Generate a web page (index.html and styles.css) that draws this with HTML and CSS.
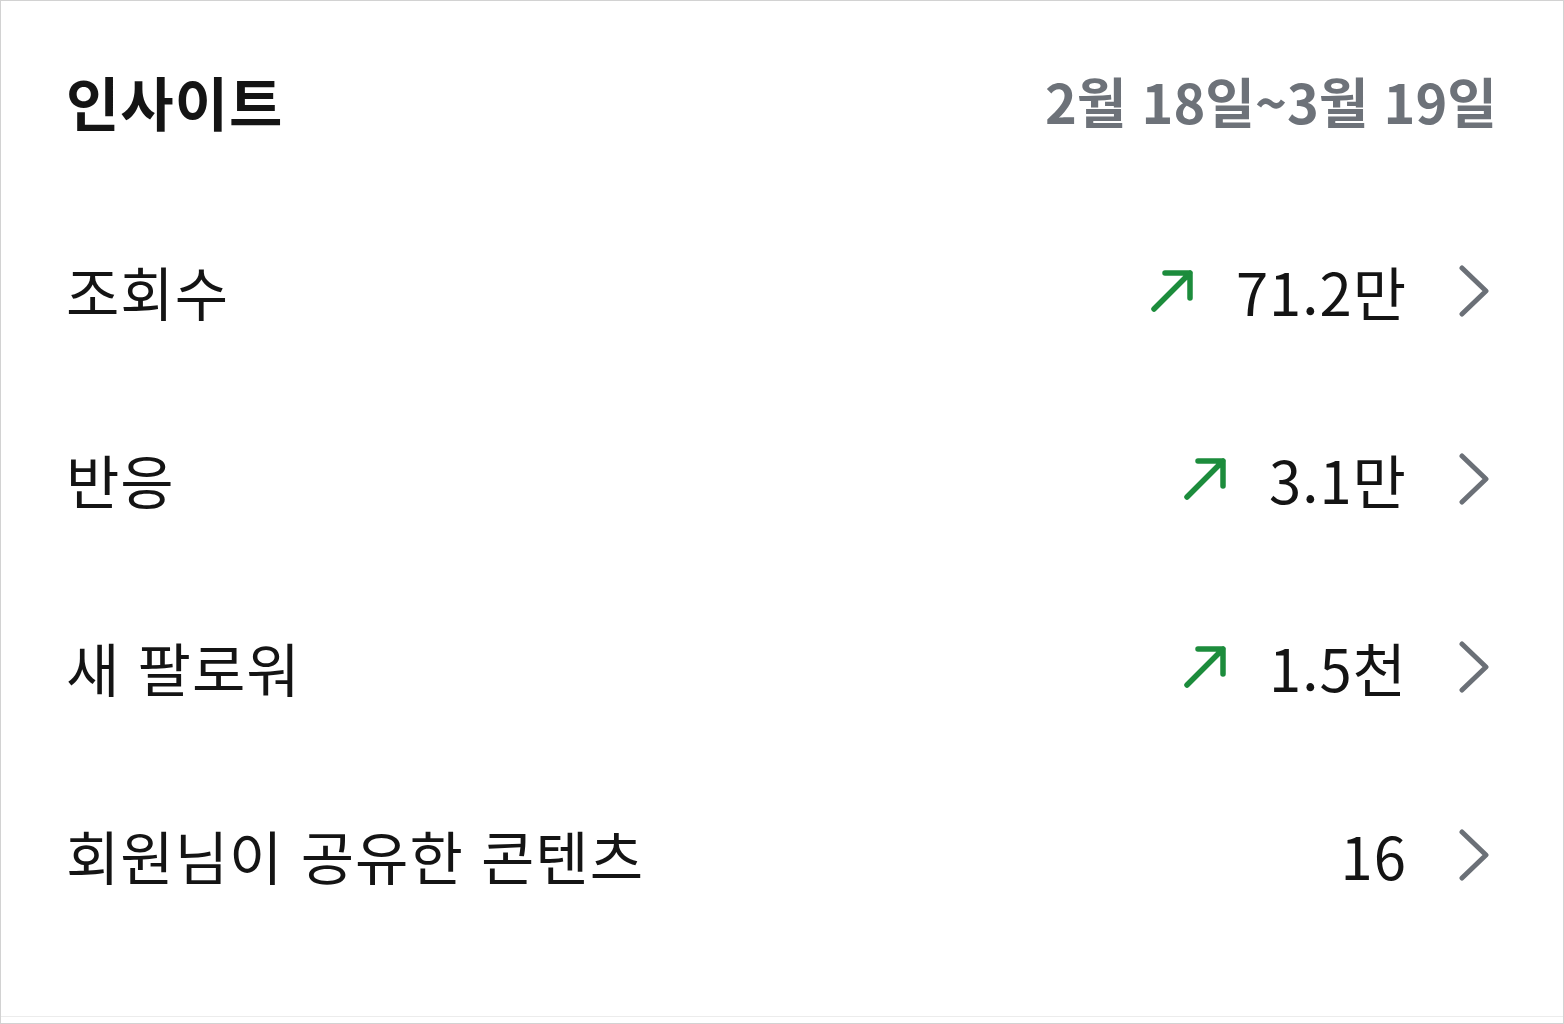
FILE: index.html
```html
<!DOCTYPE html>
<html lang="ko">
<head>
    <meta charset="UTF-8">
    <meta name="viewport" content="width=device-width, initial-scale=1.0">
    <title>인사이트</title>
    <link rel="stylesheet" href="styles.css">
</head>
<body>
    <div class="card">
        <div class="header">
            <h1 class="title">인사이트</h1>
            <span class="period">2월 18일~3월 19일</span>
        </div>
        <div class="list">
            <a class="row" href="#">
                <span class="label">조회수</span>
                <span class="right">
                    <svg class="trend" viewBox="0 0 44 44"><path d="M4 40 L40 4 M15 4 H40 V29"/></svg>
                    <span class="value">71.2만</span>
                    <svg class="chev" viewBox="0 0 30 52"><path d="M3 3 L27 26 L3 49"/></svg>
                </span>
            </a>
            <a class="row" href="#">
                <span class="label">반응</span>
                <span class="right">
                    <svg class="trend" viewBox="0 0 44 44"><path d="M4 40 L40 4 M15 4 H40 V29"/></svg>
                    <span class="value">3.1만</span>
                    <svg class="chev" viewBox="0 0 30 52"><path d="M3 3 L27 26 L3 49"/></svg>
                </span>
            </a>
            <a class="row" href="#">
                <span class="label">새 팔로워</span>
                <span class="right">
                    <svg class="trend" viewBox="0 0 44 44"><path d="M4 40 L40 4 M15 4 H40 V29"/></svg>
                    <span class="value">1.5천</span>
                    <svg class="chev" viewBox="0 0 30 52"><path d="M3 3 L27 26 L3 49"/></svg>
                </span>
            </a>
            <a class="row" href="#">
                <span class="label">회원님이 공유한 콘텐츠</span>
                <span class="right">
                    <span class="value">16</span>
                    <svg class="chev" viewBox="0 0 30 52"><path d="M3 3 L27 26 L3 49"/></svg>
                </span>
            </a>
        </div>
        <div class="spacer"></div>
    </div>
</body>
</html>
```

FILE: styles.css
```css
body
{
    margin: 0;
    background: #fff;
    font-family: "Noto Sans CJK KR", "Noto Sans", sans-serif;
    color: #141414;
}
.card
{
    box-sizing: border-box;
    height: 1024px;
    border: 1px solid #d2d2d2;
    display: flex;
    flex-direction: column;
    padding-bottom: 6px;
}
.header
{
    display: flex;
    justify-content: space-between;
    align-items: center;
    height: 193px;
    padding: 3px 66px 0 65px;
}
.title
{
    margin: 0;
    font-size: 58px;
    font-weight: 700;
    letter-spacing: 1px;
}
.period
{
    font-size: 54px;
    font-weight: 700;
    color: #6d7279;
}
.row
{
    display: flex;
    justify-content: space-between;
    align-items: center;
    height: 188px;
    padding: 0 74px 0 65px;
    text-decoration: none;
    color: inherit;
}
.label
{
    font-size: 58px;
    letter-spacing: 1px;
}
.right
{
    display: flex;
    align-items: center;
}
.value
{
    font-size: 58px;
    letter-spacing: 1px;
}
.trend
{
    width: 44px;
    height: 44px;
    margin-right: 42px;
    fill: none;
    stroke: #1c8c3c;
    stroke-width: 5.5;
    stroke-linecap: round;
    stroke-linejoin: round;
}
.chev
{
    width: 30px;
    height: 52px;
    margin-left: 52px;
    fill: none;
    stroke: #6b7077;
    stroke-width: 5;
    stroke-linecap: round;
    stroke-linejoin: round;
}
.spacer
{
    flex: 1;
    border-bottom: 1px solid #ececec;
}
```
